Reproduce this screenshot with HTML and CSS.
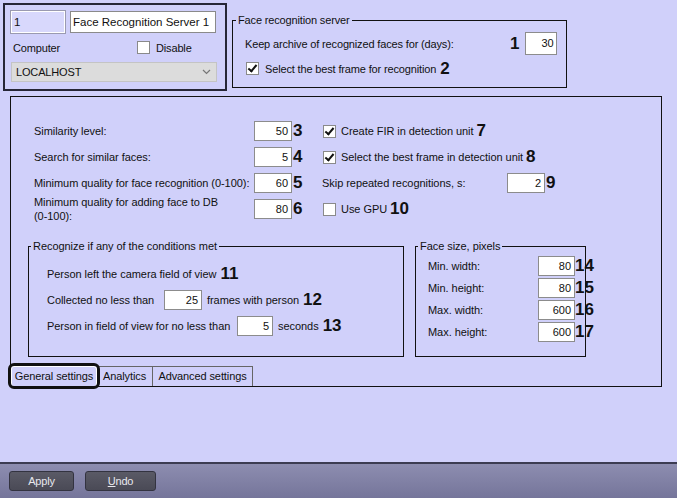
FILE: index.html
```html
<!DOCTYPE html>
<html>
<head>
  <title>Face Recognition Server</title>
  <link rel="stylesheet" href="styles.css">
</head>
<body>
  <div class="top">
    <div class="server-card">
      <div class="name-row">
        <div class="field field-id">1</div>
        <div class="field field-name">Face Recognition Server 1</div>
      </div>
      <div class="computer-row">
        <span class="computer-label">Computer</span>
        <span class="check"><span class="box"></span>Disable</span>
      </div>
      <div class="select">
        <span>LOCALHOST</span>
        <svg width="9" height="6" viewBox="0 0 9 6"><polyline points="1,1 4.5,4.5 8,1" fill="none" stroke="#777" stroke-width="1.2"/></svg>
      </div>
    </div>

    <fieldset class="group server-group">
      <legend>Face recognition server</legend>
      <div class="srv-row">
        <span class="srv-label">Keep archive of recognized faces for (days):</span>
        <b class="num">1</b>
        <span class="input srv-input">30</span>
      </div>
      <div class="srv-row">
        <span class="check"><span class="box checked"></span>Select the best frame for recognition</span>
        <b class="num">2</b>
      </div>
    </fieldset>
  </div>

  <div class="panel">
    <div class="settings">
      <div class="col col-left">
        <div class="row"><span class="label">Similarity level:</span><span class="input">50</span><b class="num">3</b></div>
        <div class="row"><span class="label">Search for similar faces:</span><span class="input">5</span><b class="num">4</b></div>
        <div class="row"><span class="label">Minimum quality for face recognition (0-100):</span><span class="input">60</span><b class="num">5</b></div>
        <div class="row"><span class="label">Minimum quality for adding face to DB<br>(0-100):</span><span class="input">80</span><b class="num">6</b></div>
      </div>
      <div class="col col-right">
        <div class="row"><span class="check"><span class="box checked"></span>Create FIR in detection unit</span><b class="num">7</b></div>
        <div class="row"><span class="check"><span class="box checked"></span>Select the best frame in detection unit</span><b class="num">8</b></div>
        <div class="row"><span class="label skip-label">Skip repeated recognitions, s:</span><span class="input">2</span><b class="num">9</b></div>
        <div class="row"><span class="check"><span class="box"></span>Use GPU</span><b class="num">10</b></div>
      </div>
    </div>

    <div class="groups">
      <fieldset class="group cond-group">
        <legend>Recognize if any of the conditions met</legend>
        <div class="cond-row"><span>Person left the camera field of view</span><b class="num">11</b></div>
        <div class="cond-row"><span class="cond-label collected">Collected no less than</span><span class="input">25</span><span class="after">frames with person</span><b class="num">12</b></div>
        <div class="cond-row"><span class="cond-label infield">Person in field of view for no less than</span><span class="input small">5</span><span class="after">seconds</span><b class="num">13</b></div>
      </fieldset>

      <fieldset class="group size-group">
        <legend>Face size, pixels</legend>
        <div class="size-row"><span class="size-label">Min. width:</span><span class="input">80</span><b class="num">14</b></div>
        <div class="size-row"><span class="size-label">Min. height:</span><span class="input">80</span><b class="num">15</b></div>
        <div class="size-row"><span class="size-label">Max. width:</span><span class="input">600</span><b class="num">16</b></div>
        <div class="size-row"><span class="size-label">Max. height:</span><span class="input">600</span><b class="num">17</b></div>
      </fieldset>
    </div>

    <div class="tabs">
      <div class="tab tab-general active">General settings</div>
      <div class="tab tab-analytics">Analytics</div>
      <div class="tab tab-advanced">Advanced settings</div>
    </div>
  </div>

  <div class="bottom-bar">
    <button class="btn btn-apply">Apply</button>
    <button class="btn btn-undo"><u>U</u>ndo</button>
  </div>
</body>
</html>
```

FILE: styles.css
```css
html, body {
  margin: 0;
  height: 100%;
}

body {
  display: flex;
  flex-direction: column;
  background-color: #d0d0fa;
  font-family: "Liberation Sans", Arial, sans-serif;
  font-size: 11px;
  letter-spacing: -0.15px;
  color: #111;
  padding: 3px 0 0 0;
  box-sizing: border-box;
  white-space: nowrap;
}

.top {
  display: flex;
  align-items: flex-start;
  margin-left: 3px;
}

/* server card */
.server-card {
  width: 224px;
  height: 88px;
  box-sizing: border-box;
  border: 2px solid #262636;
  padding: 6px 0 0 6px;
}

.name-row {
  display: flex;
  gap: 5px;
}

.field {
  height: 22px;
  box-sizing: border-box;
  line-height: 20px;
  padding: 0 2px;
  font-size: 11.5px;
  letter-spacing: 0;
}

.field-id {
  width: 54px;
  background-color: #d8d8fc;
  border: 1px solid #fff;
  box-shadow: 0 0 0 1px #9a9ab0;
}

.field-name {
  width: 146px;
  background-color: #fff;
  border: 1px solid #8a8a8a;
}

.computer-row {
  display: flex;
  align-items: center;
  height: 29px;
  padding-left: 2px;
}

.computer-label {
  width: 124px;
}

.select {
  width: 206px;
  height: 20px;
  box-sizing: border-box;
  background-color: #dcdcdc;
  border: 1px solid #c4c4c4;
  display: flex;
  align-items: center;
  justify-content: space-between;
  padding: 0 5px 0 4px;
}

/* check boxes */
.check {
  display: flex;
  align-items: center;
}

.box {
  width: 13px;
  height: 13px;
  box-sizing: border-box;
  border: 1px solid #8a8a8a;
  background-color: #fff;
  margin-right: 6px;
  flex-shrink: 0;
  position: relative;
}

.box.checked::after {
  content: "";
  position: absolute;
  left: 3px;
  top: 0px;
  width: 3px;
  height: 7px;
  border: solid #111;
  border-width: 0 2px 2px 0;
  transform: rotate(40deg);
}

.num {
  font-family: "Liberation Sans", Arial, sans-serif;
  font-weight: bold;
  font-size: 17px;
  line-height: 18px;
  letter-spacing: 0;
  flex-shrink: 0;
}

/* group boxes */
.group {
  margin: 0;
  padding: 0;
  min-width: 0;
  border: 1px solid #111;
  box-sizing: border-box;
}

.group legend {
  padding: 0 2px;
  line-height: 14px;
}

.server-group {
  margin: 10px 0 0 5px;
  width: 335px;
  height: 75px;
  padding: 4px 7px 0 12px;
}

.server-group legend {
  margin-left: -9px;
}

.srv-row {
  display: flex;
  align-items: center;
  height: 25px;
}

.srv-label {
  width: 265px;
  flex-shrink: 0;
}

.srv-row .check {
  padding-left: 1px;
}

.srv-row .check + .num {
  margin-left: 4px;
}

.input {
  width: 38px;
  height: 20px;
  box-sizing: border-box;
  border: 1px solid #8c8c8c;
  background-color: #fff;
  text-align: right;
  padding-right: 3px;
  line-height: 18px;
  flex-shrink: 0;
}

.srv-input {
  width: 32px;
  height: 23px;
  line-height: 21px;
  margin-left: 6px;
}

/* main panel */
.panel {
  margin: 5px 0 0 10px;
  width: 652px;
  border: 1px solid #111;
  box-sizing: border-box;
  font-size: 11px;
  letter-spacing: -0.05px;
}

.settings {
  display: flex;
  padding: 21px 0 0 23px;
}

.col-left {
  width: 288px;
  flex-shrink: 0;
}

.row {
  display: flex;
  align-items: center;
  height: 26px;
}

.label {
  width: 220px;
  line-height: 14px;
  flex-shrink: 0;
}

.skip-label {
  width: 185px;
}

.row .num {
  margin-left: 1px;
}

.col-right .check {
  padding-left: 1px;
}

.col-right .check .box {
  margin-right: 5px;
}

.col-right .check + .num {
  margin-left: 3px;
}

.groups {
  display: flex;
  gap: 11px;
  margin: 17px 0 0 17px;
}

.cond-group {
  width: 376px;
  height: 118px;
  padding: 8px 0 0 18px;
}

.cond-group legend {
  margin-left: -16px;
}

.cond-row {
  display: flex;
  align-items: center;
  height: 26px;
}

.cond-row span + .num {
  margin-left: 4px;
}

.cond-label {
  flex-shrink: 0;
}

.collected {
  width: 117px;
}

.infield {
  width: 190px;
}

.input.small {
  width: 36px;
}

.after {
  margin-left: 5px;
}

.size-group {
  width: 171px;
  height: 118px;
  padding: 2px 0 0 12px;
}

.size-group legend {
  margin-left: -10px;
}

.size-row {
  display: flex;
  align-items: center;
  height: 22px;
}

.size-label {
  width: 110px;
  flex-shrink: 0;
}

.size-row .input {
  width: 37px;
}

/* tabs */
.tabs {
  display: flex;
  margin-top: 9px;
  font-size: 11px;
  letter-spacing: -0.1px;
}

.tab {
  height: 20px;
  box-sizing: border-box;
  border: 1px solid #666;
  border-bottom: none;
  line-height: 19px;
  text-align: center;
}

.tab + .tab {
  border-left: none;
}

.tab-general {
  width: 86px;
}

.tab-analytics {
  width: 56px;
}

.tab-advanced {
  width: 100px;
}

.tab.active {
  border-radius: 3px;
  outline: 3px solid #111;
  border-color: #fff;
  position: relative;
  z-index: 1;
}

/* bottom bar */
.bottom-bar {
  margin-top: auto;
  height: 36px;
  box-sizing: border-box;
  border-top: 2px solid #3c3c52;
  background: linear-gradient(#8d8db0, #75759a);
  display: flex;
  gap: 11px;
  padding: 7px 0 0 9px;
}

.btn {
  height: 20px;
  padding: 0;
  border: 1px solid #333340;
  border-radius: 3px;
  background: linear-gradient(#5a5a66, #4a4a56);
  color: #e8e8ee;
  font-family: "Liberation Sans", Arial, sans-serif;
  font-size: 11px;
  letter-spacing: -0.2px;
}

.btn-apply {
  width: 65px;
}

.btn-undo {
  width: 71px;
}
```
